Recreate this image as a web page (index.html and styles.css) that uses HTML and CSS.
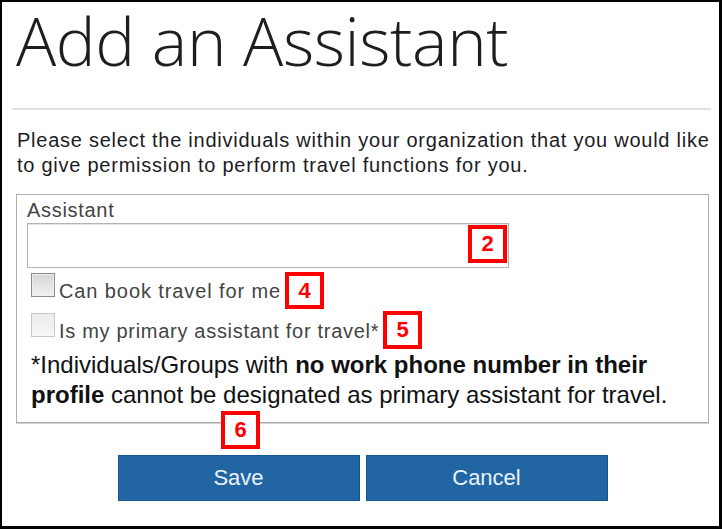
FILE: index.html
```html
<!DOCTYPE html>
<html lang="en">
<head>
<meta charset="utf-8">
<title>Add an Assistant</title>
<link rel="stylesheet" href="styles.css">
</head>
<body>
<div class="frame">
  <h1 class="title">Add an Assistant</h1>
  <hr class="rule">
  <p class="intro">Please select the individuals within your organization that you would like to give permission to perform travel functions for you.</p>
  <div class="box">
    <div class="field-label">Assistant</div>
    <div class="input">
      <span class="badge badge-in">2</span>
    </div>
    <div class="check-row row-one">
      <span class="checkbox"></span>
      <span class="check-text">Can book travel for me</span>
      <span class="badge">4</span>
    </div>
    <div class="check-row row-two">
      <span class="checkbox disabled"></span>
      <span class="check-text">Is my primary assistant for travel*</span>
      <span class="badge">5</span>
    </div>
    <p class="note">*Individuals/Groups with <b>no work phone number in their profile</b> cannot be designated as primary assistant for travel.</p>
  </div>
  <div class="actions">
    <span class="badge badge-six">6</span>
    <button class="btn" type="button">Save</button>
    <button class="btn" type="button">Cancel</button>
  </div>
</div>
</body>
</html>
```
FILE: styles.css
```css
* { box-sizing: border-box; }
html, body { margin: 0; padding: 0; background: #fff; }
.frame {
  width: 722px;
  height: 529px;
  border-style: solid;
  border-color: #000;
  border-width: 2px 3px 3px 2px;
  background: #fff;
  font-family: "Liberation Sans", Arial, sans-serif;
  color: #222;
}
.title {
  margin: 0 0 0 14px;
  font-family: "Open Sans", "Noto Sans", sans-serif;
  font-weight: 300;
  font-size: 67px;
  line-height: 76px;
  color: #1e1e1e;
  letter-spacing: -0.4px;
}
.rule {
  margin: 30px 8px 0 10px;
  border: 0;
  height: 2px;
  background: #e2e2e2;
}
.intro {
  margin: 18px 0 0 15px;
  font-size: 20px;
  line-height: 25px;
  letter-spacing: 0.75px;
  color: #1c1c24;
  width: 702px;
}
.box {
  margin: 16px 0 0 14px;
  width: 693px;
  border: 1px solid #adadad;
  box-shadow: 0 1px 0 #d0d0d0;
  padding: 4px 10px 12px 10px;
}
.field-label {
  font-size: 20px;
  line-height: 22px;
  letter-spacing: 0.7px;
  color: #444;
}
.input {
  position: relative;
  margin-top: 2px;
  width: 482px;
  height: 45px;
  border: 1px solid #b3b3b3;
  box-shadow: inset 0 1px 1px #e2e2e2;
  background: #fff;
}
.badge {
  display: inline-flex;
  align-items: center;
  justify-content: center;
  width: 39px;
  height: 38px;
  border: 4px solid #f00;
  color: #f00;
  background: #fff;
  font-family: "Liberation Sans", Arial, sans-serif;
  font-weight: bold;
  font-size: 22px;
  line-height: 1;
}
.badge-in {
  position: absolute;
  right: 1px;
  top: 1px;
}
.check-row {
  display: flex;
  align-items: flex-start;
  margin-left: 4px;
}
.row-one { margin-top: 4px; }
.row-two { margin-top: 2px; }
.checkbox {
  width: 24px;
  height: 24px;
  border: 1px solid #8c8c8c;
  background: linear-gradient(#d6d6d6, #f2f2f2);
  box-shadow: inset 0 0 0 1px #eeeeee;
  margin-top: 1px;
  margin-right: 4px;
}
.checkbox.disabled {
  border-color: #c9c9c9;
  background: linear-gradient(#ececec, #f6f6f6);
  box-shadow: none;
  margin-top: 2px;
}
.check-text {
  font-size: 20px;
  line-height: 20px;
  color: #444;
  margin-top: 9px;
  margin-right: 4px;
}
.row-one .check-text { letter-spacing: 0.9px; }
.row-two .check-text { margin-top: 10px; letter-spacing: 0.7px; }
.row-one .badge { height: 37px; }
.note {
  margin: 1px 0 0 4px;
  font-size: 24px;
  line-height: 30px;
  color: #111;
}
.note b { font-weight: bold; }
.actions {
  position: relative;
  display: flex;
  justify-content: center;
  gap: 6px;
  margin-top: 32px;
  padding-left: 4px;
}
.badge-six {
  position: absolute;
  left: 219px;
  top: -44px;
  width: 39px;
  height: 38px;
}
.btn {
  width: 242px;
  height: 46px;
  background: #2166a3;
  border: 1px solid #1a5791;
  color: #eaf1f8;
  font-family: "Liberation Sans", Arial, sans-serif;
  font-size: 22px;
  padding: 0;
  margin: 0;
}
```
